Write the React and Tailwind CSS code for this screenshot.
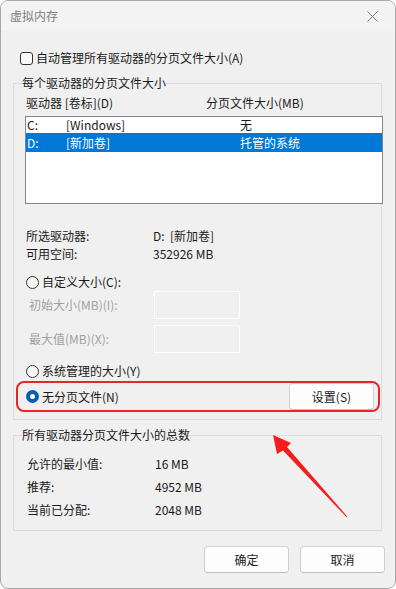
import React from 'react'

const font = { fontFamily: '"Noto Sans CJK SC", "Noto Sans", sans-serif' }

function Checkbox() {
  return <span className="inline-block w-[13px] h-[13px] rounded-[3px] border border-[#333] bg-[#fbfbfb]" />
}

function Radio({ checked }) {
  if (checked) {
    return (
      <span className="inline-flex items-center justify-center w-[13px] h-[13px] rounded-full bg-[#005fb8]">
        <span className="w-[5px] h-[5px] rounded-full bg-white" />
      </span>
    )
  }
  return <span className="inline-block w-[13px] h-[13px] rounded-full border border-[#333] bg-[#f7f7f7]" />
}

// legend sits inside the fieldset padding, so each group nudges it back
function Group({ title, children, className = '', legendClass = '' }) {
  return (
    <fieldset className={`border border-[#dcdcdc] ${className}`}>
      <legend className={`px-0 leading-[16px] text-[#1a1a1a] ${legendClass}`}>{title}</legend>
      {children}
    </fieldset>
  )
}

function Button({ children, className = '' }) {
  return (
    <button className={`h-[27px] rounded-[4px] border border-[#d0d0d0] border-b-[#bdbdbd] bg-[#fdfdfd] text-[12px] leading-[16px] text-[#1a1a1a] ${className}`}>
      {children}
    </button>
  )
}

export default function App() {
  const totals = [
    ['允许的最小值:', '16 MB'],
    ['推荐:', '4952 MB'],
    ['当前已分配:', '2048 MB'],
  ]

  return (
    <div className="relative w-[396px] h-[589px] bg-white text-[12px] leading-[16px]" style={font}>
      <div className="w-full h-full rounded-[8px] border border-[#a8a8a8] bg-[#f0f0f0] overflow-hidden flex flex-col">
        {/* title bar */}
        <div className="h-[30px] shrink-0 bg-[#f3f3f3] flex items-center justify-between pl-[9px] pr-[17px]">
          <span className="text-[#808080]">虚拟内存</span>
          <svg width="11" height="11" viewBox="0 0 11 11" className="mt-[1px]">
            <path d="M0.5 0.5 L10.5 10.5 M10.5 0.5 L0.5 10.5" stroke="#7c7c7c" strokeWidth="1" />
          </svg>
        </div>

        <div className="pl-[12px] pr-[13px]">
          {/* auto manage */}
          <div className="mt-[19px] h-[16px] pl-[7px] flex items-center gap-[3px] text-[#1a1a1a]">
            <Checkbox />
            <span>自动管理所有驱动器的分页文件大小(A)</span>
          </div>

          <Group title="每个驱动器的分页文件大小" className="mt-[9px] pl-[11px]" legendClass="-ml-[3px]">
            <div className="mt-[4px] h-[16px] flex text-[#1a1a1a]">
              <span className="pl-[1px] w-[181px]">驱动器 [卷标](D)</span>
              <span>分页文件大小(MB)</span>
            </div>

            <div className="mt-[5px] -mr-[2px] h-[88px] border border-[#828790] bg-white">
              <div className="h-[16px] flex items-center text-[#1a1a1a]">
                <span className="pl-[1px] w-[40px]">C:</span>
                <span className="w-[174px]">[Windows]</span>
                <span>无</span>
              </div>
              <div className="h-[19px] flex items-center bg-[#0078d7] text-white">
                <span className="pl-[1px] w-[40px]">D:</span>
                <span className="w-[174px]">[新加卷]</span>
                <span>托管的系统</span>
              </div>
            </div>

            <div className="mt-[23px] text-[#1a1a1a]">
              <div className="h-[18px] flex items-center">
                <span className="pl-[1px] w-[128px]">所选驱动器:</span>
                <span>D:&nbsp;&nbsp;[新加卷]</span>
              </div>
              <div className="h-[18px] flex items-center">
                <span className="pl-[1px] w-[128px]">可用空间:</span>
                <span>352926 MB</span>
              </div>
            </div>

            <div className="mt-[10px] h-[18px] pl-[1px] flex items-center gap-[3px] text-[#1a1a1a]">
              <Radio />
              <span>自定义大小(C):</span>
            </div>

            <div className="h-[28px] flex items-center text-[#a0a0a0]">
              <span className="pl-[4px] w-[129px]">初始大小(MB)(I):</span>
              <div className="w-[86px] h-[28px] border border-white" />
            </div>
            <div className="mt-[6px] h-[28px] flex items-center text-[#a0a0a0]">
              <span className="pl-[4px] w-[129px]">最大值(MB)(X):</span>
              <div className="w-[86px] h-[28px] border border-white" />
            </div>

            <div className="mt-[9px] h-[18px] pl-[1px] flex items-center gap-[3px] text-[#1a1a1a]">
              <Radio />
              <span>系统管理的大小(Y)</span>
            </div>

            <div className="mt-[1px] -ml-[9px] mr-[1px] h-[31px] rounded-[8px] border-2 border-[#e5262a] pl-[8px] pr-[4px] flex items-center justify-between text-[#1a1a1a]">
              <div className="flex items-center gap-[3px]">
                <Radio checked />
                <span>无分页文件(N)</span>
              </div>
              <Button className="w-[85px]">设置(S)</Button>
            </div>
            <div className="h-[7px]" />
          </Group>

          <Group title="所有驱动器分页文件大小的总数" className="mt-[7px] pl-[13px] pt-[9px] pb-[9px]" legendClass="-ml-[5px]">
            {totals.map(([label, value]) => (
              <div key={label} className="h-[23px] flex items-center text-[#1a1a1a]">
                <span className="w-[128px]">{label}</span>
                <span>{value}</span>
              </div>
            ))}
          </Group>

          <div className="mt-[15px] -mr-[3px] flex justify-end gap-[11px]">
            <Button className="w-[85px]">确定</Button>
            <Button className="w-[85px]">取消</Button>
          </div>
        </div>
      </div>

      {/* red annotation arrow */}
      <svg className="absolute left-0 top-0 pointer-events-none" width="396" height="589">
        <polygon
          points="273,435 291,443 287,447 347.4,516.7 346.6,517.3 283,450.5 277,454"
          fill="#f51c1c"
        />
      </svg>
    </div>
  )
}
